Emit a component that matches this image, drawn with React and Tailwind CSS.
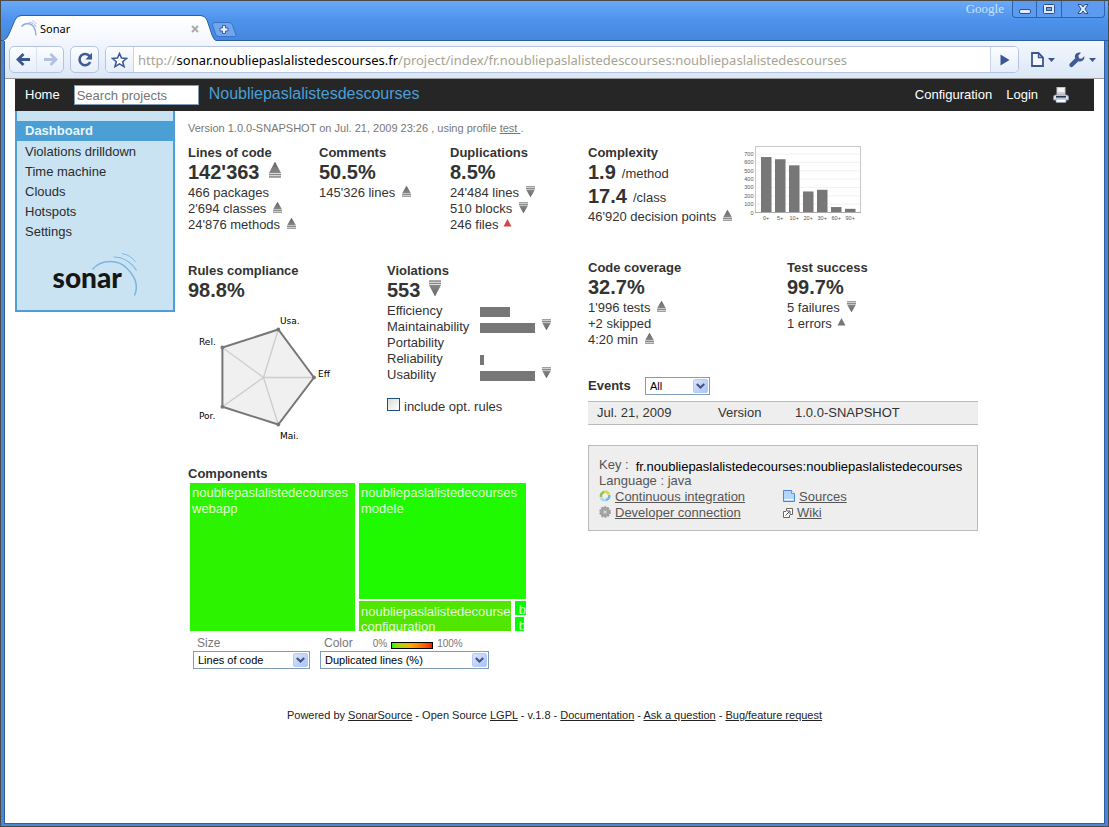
import React from "react";

function Trend({ dir = "up", size = "sm" }) {
  const cls = size === "lg" ? "w-[12px] h-[16px] ml-[9px] mb-1" : "w-[9px] h-[11px] ml-[7px] mb-[3px]";
  return (
    <svg viewBox="0 0 9 12" className={"inline-block shrink-0 " + cls} preserveAspectRatio="none" aria-hidden="true">
      <defs>
        <linearGradient id="trendFill" x1="0" x2="0" y1="0" y2="1">
          <stop offset="0" stopColor="#666" />
          <stop offset="1" stopColor="#888" />
        </linearGradient>
      </defs>
      <g transform={dir === "down" ? "rotate(180 4.5 6)" : undefined}>
        <path d="M4.3 0 H4.7 L9 8.2 H0 Z" fill="url(#trendFill)" />
        <rect x="0" y="8.8" width="9" height="1.2" fill="#858585" />
        <rect x="0" y="10.6" width="9" height="1.2" fill="#8c8c8c" />
      </g>
    </svg>
  );
}

function SmallTriangle({ color }) {
  return (
    <svg viewBox="0 0 9 8" className="ml-1 inline-block h-[8px] w-[9px] shrink-0" aria-hidden="true">
      <path d="M4.5 0 L8.5 7.500 H0.5 Z" fill={color} />
    </svg>
  );
}

function Title({ children }) {
  return <h2 className="font-bold leading-[16px]">{children}</h2>;
}

function Big({ children, trend, unit }) {
  return (
    <p className="flex h-6 items-center whitespace-nowrap pb-0.5">
      <strong className="text-[20px] leading-[22px]">{children}</strong>
      {unit && <span className="ml-1.5 mt-1">{unit}</span>}
      {trend && <Trend dir={trend} size="lg" />}
    </p>
  );
}

function Line({ children, trend }) {
  return (
    <p className="flex h-4 items-center whitespace-nowrap">
      {children}
      {trend && <Trend dir={trend} />}
    </p>
  );
}

function Select({ id, options, className }) {
  return (
    <span className={"relative block h-[18px] " + className}>
      <select
        id={id}
        className="block h-full w-full appearance-none rounded-none border border-[#7f9db9] bg-white pl-1 pr-5 text-[11px] leading-[14px] text-black outline-none"
      >
        {options.map((o) => (
          <option key={o}>{o}</option>
        ))}
      </select>
      <svg viewBox="0 0 15 14" className="pointer-events-none absolute right-[2px] top-[2px] h-[14px] w-[15px]" aria-hidden="true">
        <defs>
          <linearGradient id="arrowBtn" x1="0" x2="1" y1="0" y2="1">
            <stop offset="0" stopColor="#dbe6fe" />
            <stop offset="1" stopColor="#a9c1f5" />
          </linearGradient>
        </defs>
        <rect x="0.5" y="0.5" width="14" height="13" rx="1.5" fill="url(#arrowBtn)" stroke="#b7caf5" />
        <path d="M3.8 5 L7.5 8.6 L11.2 5" fill="none" stroke="#42567f" strokeWidth="2.1" />
      </svg>
    </span>
  );
}

function TitleBar() {
  return (
    <div className="flex h-10 items-end justify-between border-b border-[#2a60a8] bg-linear-to-b from-[#6aa9f7] via-[#4c92ec] to-[#4787dc] pl-[3px]">
      <div className="flex items-end">
        <div className="relative -mb-px h-[26px] w-[212px]">
          <svg viewBox="0 0 212 26" className="absolute inset-0 h-full w-full" aria-hidden="true">
            <defs>
              <linearGradient id="tabFill" x1="0" x2="0" y1="0" y2="1">
                <stop offset="0" stopColor="#ffffff" />
                <stop offset="1" stopColor="#f3f7fd" />
              </linearGradient>
            </defs>
            <path
              d="M0 26 V25 Q3 24 5 19 L11 5 Q13 1 17 1 H197 Q201 1 203 5 L208 20 Q210 25 212 25.5 V26 Z"
              fill="url(#tabFill)"
            />
            <path
              d="M0 25 Q3 24 5 19 L11 5 Q13 0.5 17 0.5 H197 Q201 0.5 203 5 L208 20 Q210 25 212 25.5"
              fill="none"
              stroke="#2a60a8"
            />
          </svg>
          <div className="relative flex h-full items-center pl-[17px] pr-[17px]">
            <svg viewBox="0 0 16 16" className="h-4 w-4" fill="none" aria-hidden="true">
              <path d="M0.5 6.5 Q3 3.5 7 3.5 Q14.5 4 15 15.5" stroke="#93abd9" strokeWidth="1.4" />
              <path d="M8 2.2 Q13 2.4 15.2 7" stroke="#a9bce2" />
              <path d="M11 0.8 Q14 1.4 15.6 4" stroke="#bccbe9" />
            </svg>
            <span className="ml-[3px] mt-0.5 font-['Noto_Sans',sans-serif] text-[11px] text-black">Sonar</span>
            <button type="button" aria-label="Close tab" className="ml-auto mt-0.5">
              <svg viewBox="0 0 8 8" className="h-2 w-2" aria-hidden="true">
                <path d="M1 1 L7 7 M7 1 L1 7" stroke="#a8a8a8" strokeWidth="1.8" />
              </svg>
            </button>
          </div>
        </div>
        <button type="button" aria-label="New tab" className="mb-[2px] -ml-[5px]">
          <svg viewBox="0 0 26 17" className="h-[17px] w-[26px]" aria-hidden="true">
            <path
              d="M4 1.5 H18 Q20.5 1.5 21.5 4 L25 14 Q25 15.5 23.5 15.5 H8 Q5.5 15.5 4.5 13 L1.5 4 Q1 1.5 4 1.5 Z"
              fill="#71a6ee"
              stroke="#3b74c2"
            />
            <path
              d="M11.5 4.5 H14.5 V7 H17 V10 H14.5 V12.5 H11.5 V10 H9 V7 H11.5 Z"
              fill="#e9f1fd"
              stroke="#33629f"
            />
          </svg>
        </button>
      </div>
      <div className="mr-[3px] flex items-start self-start">
        <span className="mr-2 font-['Liberation_Serif',serif] text-[13px] leading-[16px] text-[#cfe2fb]">Google</span>
        <div className="flex h-[17px] divide-x divide-[#2f62ad] rounded-b-[4px] border border-t-0 border-[#2f62ad] bg-[#5c9bf0]">
          <button type="button" aria-label="Minimize" className="flex w-6 items-center justify-center">
            <svg viewBox="0 0 12 12" className="h-3 w-3" aria-hidden="true">
              <rect x="0.5" y="6.5" width="11" height="4" rx="1.5" fill="#dfeafa" stroke="#2d4f85" />
            </svg>
          </button>
          <button type="button" aria-label="Maximize" className="flex w-[25px] items-center justify-center">
            <svg viewBox="0 0 12 12" className="h-3 w-3" aria-hidden="true">
              <rect x="0.5" y="1.5" width="11" height="9" rx="1" fill="#dfeafa" stroke="#2d4f85" />
              <rect x="3.5" y="4.5" width="5" height="3" fill="#6ba6f3" stroke="#2d4f85" />
            </svg>
          </button>
          <button type="button" aria-label="Close" className="flex w-[42px] items-center justify-center">
            <svg viewBox="0 0 12 12" className="h-3 w-3" aria-hidden="true">
              <path
                d="M1 1.5 H4.2 L6 4 L7.8 1.5 H11 L8 6 L11 10.5 H7.8 L6 8 L4.2 10.5 H1 L4 6 Z"
                fill="#dfeafa"
                stroke="#2d4f85"
              />
            </svg>
          </button>
        </div>
      </div>
    </div>
  );
}

function Toolbar() {
  return (
    <div className="flex h-[38px] items-center border-b border-[#9c9c9c] bg-linear-to-b from-[#f3f7fd] to-[#dbe7f6] pl-1 pr-2">
      <div className="flex h-[27px] rounded-[5px] border border-[#b5c3e0] bg-linear-to-b from-[#fbfdff] to-[#e6eefa]">
        <button type="button" aria-label="Back" className="flex w-[26px] items-center justify-center">
          <svg viewBox="0 0 15 13" className="h-[13px] w-[15px]" aria-hidden="true">
            <path d="M14 6.5 H2 M7.5 1 L2 6.5 L7.5 12" fill="none" stroke="#3a5791" strokeWidth="2.8" />
          </svg>
        </button>
        <button type="button" aria-label="Forward" className="flex w-[27px] items-center justify-center border-l border-[#dbe3f1]">
          <svg viewBox="0 0 15 13" className="h-[13px] w-[15px]" aria-hidden="true">
            <path d="M1 6.5 H13 M7.5 1 L13 6.5 L7.5 12" fill="none" stroke="#b0c1e2" strokeWidth="2.8" />
          </svg>
        </button>
      </div>
      <button
        type="button"
        aria-label="Reload"
        className="ml-1.5 flex h-[27px] w-[29px] items-center justify-center rounded-[5px] border border-[#b5c3e0] bg-linear-to-b from-[#fbfdff] to-[#e6eefa]"
      >
        <svg viewBox="0 0 16 16" className="h-4 w-4" aria-hidden="true">
          <path d="M12.6 4.2 A5.6 5.6 0 1 0 13.2 10" fill="none" stroke="#3f5b96" strokeWidth="2.6" />
          <path d="M15 0.8 V7.4 H8.4 Z" fill="#3f5b96" />
        </svg>
      </button>
      <form className="ml-1.5 flex h-[27px] flex-1 overflow-hidden rounded-[5px] border border-[#b5c3e0] bg-white" onSubmit={(e) => e.preventDefault()}>
        <button type="button" aria-label="Bookmark" className="flex w-7 items-center justify-center border-r border-[#c9d4e9] bg-linear-to-b from-[#fbfdff] to-[#e6eefa]">
          <svg viewBox="0 0 17 16" className="h-4 w-[17px]" aria-hidden="true">
            <path
              d="M8.5 1.5 L10.5 6 L15.6 6.4 L11.7 9.7 L13 14.6 L8.5 11.9 L4 14.6 L5.3 9.7 L1.4 6.4 L6.5 6 Z"
              fill="#fff"
              stroke="#3f5b96"
              strokeWidth="1.6"
            />
          </svg>
        </button>
        <div
          role="textbox"
          aria-label="Address"
          tabIndex={0}
          className="flex min-w-0 flex-1 items-center whitespace-nowrap pl-1 font-['Noto_Sans',sans-serif] text-[13px] text-[#a8a393]"
        >
          http://<span className="text-black">sonar.noubliepaslalistedescourses.fr</span>
          /project/index/fr.noubliepaslalistedescourses:noubliepaslalistedescourses
        </div>
        <button type="submit" aria-label="Go" className="flex w-7 items-center justify-center border-l border-[#c9d4e9] bg-linear-to-b from-[#fbfdff] to-[#e6eefa]">
          <svg viewBox="0 0 10 12" className="h-3 w-[10px]" aria-hidden="true">
            <path d="M0.5 0.5 L9.5 6 L0.5 11.5 Z" fill="#3a5791" />
          </svg>
        </button>
      </form>
      <button type="button" aria-label="Page menu" className="ml-3 flex items-center gap-1">
        <svg viewBox="0 0 13 15" className="h-[15px] w-[13px]" aria-hidden="true">
          <path d="M1 1 H7.5 L12 5.5 V14 H1 Z" fill="#f6f9fe" stroke="#3a5791" strokeWidth="1.8" />
          <path d="M7.5 1 V5.5 H12" fill="none" stroke="#3a5791" strokeWidth="1.4" />
        </svg>
        <svg viewBox="0 0 7 4" className="h-1 w-[7px]" aria-hidden="true">
          <path d="M0 0 H7 L3.5 4 Z" fill="#3a5791" />
        </svg>
      </button>
      <button type="button" aria-label="Settings menu" className="ml-3.5 flex items-center gap-1">
        <svg viewBox="0 0 16 16" className="h-4 w-4" aria-hidden="true">
          <path
            d="M15.3 4.2 L12.6 6.8 L10 6.2 L9.4 3.6 L12 0.8 C9.4 -0.2 6.6 1 6 3.6 C5.8 4.6 5.9 5.4 6.2 6.2 L0.9 11.6 C-0.9 13.6 1.8 16.4 3.9 14.6 L9.4 9.2 C12.6 10.4 16 7.8 15.3 4.2 Z"
            fill="#3f5b96"
          />
        </svg>
        <svg viewBox="0 0 7 4" className="h-1 w-[7px]" aria-hidden="true">
          <path d="M0 0 H7 L3.5 4 Z" fill="#3a5791" />
        </svg>
      </button>
    </div>
  );
}

function SiteNav() {
  return (
    <nav className="flex h-8 items-center bg-[#262626] pl-2.5 pr-[25px] text-white">
      <a href="#home">Home</a>
      <input
        type="text"
        aria-label="Search projects"
        placeholder="Search projects"
        className="ml-3.5 h-5 w-[125px] border border-[#7f9db9] bg-white px-[2px] text-[13px] text-black outline-none placeholder:text-[#757575]"
      />
      <a href="#project" className="mb-0.5 ml-2.5 text-[16px] text-[#4b9fd5]">
        Noubliepaslalistesdescourses
      </a>
      <a href="#configuration" className="ml-auto">Configuration</a>
      <a href="#login" className="ml-3.5">Login</a>
      <button type="button" aria-label="Print" className="ml-[15px]">
        <svg viewBox="0 0 16 16" className="h-4 w-4" aria-hidden="true">
          <rect x="4" y="0.5" width="8" height="8" fill="#f4f4f4" stroke="#c4c4c4" />
          <rect x="4" y="5" width="8" height="3" fill="#cfcfcf" />
          <path d="M2.5 8 H13.5 Q15.5 8 15.5 10 V13 H0.5 V10 Q0.5 8 2.5 8 Z" fill="#dde4f1" stroke="#8593ad" strokeWidth="0.8" />
          <rect x="3" y="9" width="10" height="1.6" fill="#24344f" />
          <rect x="3" y="12" width="10" height="3.4" rx="0.6" fill="#fff" stroke="#8593ad" strokeWidth="0.8" />
        </svg>
      </button>
    </nav>
  );
}

const MENU = ["Dashboard", "Violations drilldown", "Time machine", "Clouds", "Hotspots", "Settings"];

function Sidebar() {
  return (
    <aside className="w-40 shrink-0 border-2 border-t-0 border-[#4b9fd5] bg-[#cae3f2] pb-3 pt-2.5">
      <ul>
        {MENU.map((m, i) => (
          <li key={m} className="first:mb-px">
            <a
              href="#menu"
              className={
                "flex h-5 items-center pl-2 " + (i === 0 ? "bg-[#4b9fd5] font-bold text-[#e8f4fb]" : "text-[#2b2b2b]")
              }
            >
              {m}
            </a>
          </li>
        ))}
      </ul>
      <svg viewBox="0 0 100 46" className="ml-[30px] mt-2.5 h-[46px] w-[100px]" role="img" aria-label="sonar">
        <text x="5.5" y="36" fontSize="28" fontWeight="900" fill="#161616" className="font-['Lato',sans-serif]">
          sonar
        </text>
        <g fill="none" stroke="#7ab5e2" strokeWidth="1.5">
          <path d="M45.500 17.500 C54 7 72 7 80.500 17 C88.500 25 92 33 87.500 43.500" />
          <path d="M66.500 5 C76 5 84 10 89.500 18.500" strokeWidth="1.2" />
          <path d="M75 1.500 C81 2.500 85.500 5.500 88.500 10" strokeWidth="0.9" />
        </g>
      </svg>
    </aside>
  );
}

const BARS = [
  ["0+", 664],
  ["5+", 638],
  ["10+", 565],
  ["20+", 252],
  ["30+", 272],
  ["60+", 65],
  ["90+", 44],
];

function ComplexityChart() {
  return (
    <svg viewBox="0 0 120 78" className="h-[78px] w-[120px]" role="img" aria-label="Complexity distribution">
      <rect x="13.500" y="0.500" width="105" height="66" fill="#fff" stroke="#c9c9c9" />
      {[0, 1, 2, 3, 4, 5, 6, 7].map((n) => {
        const y = 66.5 - n * 8.35;
        return (
          <g key={n}>
            {n > 0 && <line x1="14" x2="118" y1={y} y2={y} stroke="#f2f2f2" />}
            <text x="11.500" y={y + 2} textAnchor="end" fontSize="5.5" fill="#555">
              {n * 100}
            </text>
          </g>
        );
      })}
      {BARS.map(([label, v], i) => (
        <g key={label}>
          <rect x={19 + i * 14} y={66.5 - v * 0.0835} width="10.500" height={v * 0.0835} fill="#777" />
          <text x={24.2 + i * 14} y="73.500" textAnchor="middle" fontSize="5.5" fill="#555">
            {label}
          </text>
        </g>
      ))}
      <line x1="13" x2="119" y1="66.500" y2="66.500" stroke="#aaa" />
    </svg>
  );
}

function Radar() {
  const pts = [
    [126, 74.5],
    [90.3, 26.5],
    [34.4, 44.5],
    [34.4, 103.8],
    [90.3, 121.5],
  ];
  return (
    <svg viewBox="0 0 150 150" className="h-[150px] w-[150px]" role="img" aria-label="Rules compliance by category">
      <polygon points={pts.map((p) => p.join(",")).join(" ")} fill="#f0f0f0" />
      {pts.map((p) => (
        <line key={p.join()} x1="75.500" y1="74.500" x2={p[0]} y2={p[1]} stroke="#ccc" strokeWidth="1.3" />
      ))}
      <polygon points={pts.map((p) => p.join(",")).join(" ")} fill="none" stroke="#777" strokeWidth="2" />
      {pts.map((p) => (
        <circle key={p.join()} cx={p[0]} cy={p[1]} r="1.900" fill="#777" />
      ))}
      <g fontSize="9" fill="#000" className="font-['DejaVu_Sans',sans-serif]">
        <text x="92" y="21">Usa.</text>
        <text x="11" y="42">Rel.</text>
        <text x="130" y="74">Eff</text>
        <text x="11" y="116">Por.</text>
        <text x="92" y="136">Mai.</text>
      </g>
    </svg>
  );
}

const VIOLATIONS = [
  { name: "Efficiency", w: 30 },
  { name: "Maintainability", w: 55, down: true },
  { name: "Portability", w: 0 },
  { name: "Reliability", w: 4 },
  { name: "Usability", w: 55, down: true },
];

function Treemap() {
  return (
    <div className="ml-[2px] mt-px flex h-[148px] w-[336px] gap-1 text-[#e2fbdc]">
      <div className="w-[165px] overflow-hidden bg-[#2cf400] pl-[2px] pt-[2px]">
        noubliepaslalistedecourses
        <br />
        webapp
      </div>
      <div className="flex w-[167px] flex-col gap-[2px]">
        <div className="h-[116px] overflow-hidden bg-[#20fa00] pl-[2px] pt-[2px]">
          noubliepaslalistedecourses
          <br />
          modele
        </div>
        <div className="flex h-[30px] gap-1">
          <div className="w-[152px] overflow-hidden bg-[#50e600] pl-[2px] pt-[3px] leading-[15px]">
            noubliepaslalistedecourses
            <br />
            configuration
          </div>
          <div className="flex flex-1 flex-col gap-[2px] leading-[18px]">
            <div className="h-[14px] overflow-hidden bg-[#00ff00] pl-1">b</div>
            <div className="h-[14px] w-[9px] overflow-hidden bg-[#00ff00] pl-1">b</div>
          </div>
        </div>
      </div>
    </div>
  );
}

function LeftColumn() {
  return (
    <div className="w-[400px] shrink-0">
      <div className="grid grid-cols-[131px_131px_1fr]">
        <section>
          <Title>Lines of code</Title>
          <Big trend="up">142'363</Big>
          <Line>466 packages</Line>
          <Line trend="up">2'694 classes</Line>
          <Line trend="up">24'876 methods</Line>
        </section>
        <section>
          <Title>Comments</Title>
          <Big>50.5%</Big>
          <Line trend="up">145'326 lines</Line>
        </section>
        <section>
          <Title>Duplications</Title>
          <Big>8.5%</Big>
          <Line trend="down">24'484 lines</Line>
          <Line trend="down">510 blocks</Line>
          <p className="flex h-4 items-center">
            246 files <span className="mb-1 ml-px flex"><SmallTriangle color="#d64545" /></span>
          </p>
        </section>
      </div>
      <div className="mt-[30px] grid grid-cols-[199px_1fr]">
        <section>
          <Title>Rules compliance</Title>
          <Big>98.8%</Big>
          <Radar />
        </section>
        <section>
          <Title>Violations</Title>
          <Big trend="down">553</Big>
          <table className="border-collapse">
            <tbody>
              {VIOLATIONS.map((v) => (
                <tr key={v.name} className="h-4">
                  <td className="w-[93px] p-0">{v.name}</td>
                  <td className="p-0">
                    <span className="flex h-4 items-end pb-0.5">
                      <span className="h-[10px] bg-[#777]" style={{ width: v.w }} />
                      {v.down && <Trend dir="down" />}
                    </span>
                  </td>
                </tr>
              ))}
            </tbody>
          </table>
          <div className="mt-[15px] flex items-start">
            <input
              id="opt"
              type="checkbox"
              className="h-[13px] w-[13px] appearance-none border border-[#1c5180] bg-linear-to-br from-[#dcdcd7] to-white checked:bg-[#4b9fd5]"
            />
            <label htmlFor="opt" className="ml-1 mt-px">include opt. rules</label>
          </div>
        </section>
      </div>
      <section className="mt-[13px]">
        <Title>Components</Title>
        <Treemap />
        <div className="ml-[5px] mt-[5px] flex gap-2.5 text-[12px] text-[#777]">
          <div>
            <label htmlFor="size" className="block pl-1 leading-[15px]">Size</label>
            <Select id="size" options={["Lines of code", "Complexity"]} className="w-[117px]" />
          </div>
          <div>
            <div className="flex h-[15px] items-center pl-1 leading-[15px]">
              <label htmlFor="color">Color</label>
              <span className="ml-5 text-[10px]">0%</span>
              <span className="mx-1 mt-1 h-[7px] w-[42px] border border-black bg-linear-to-r from-[#00f000] via-[#ffa500] to-[#ff0000]" />
              <span className="text-[10px]">100%</span>
            </div>
            <Select id="color" options={["Duplicated lines (%)", "Rules compliance"]} className="w-[169px]" />
          </div>
        </div>
      </section>
    </div>
  );
}

function RightColumn() {
  return (
    <div className="w-[390px] shrink-0">
      <section className="flex">
        <div className="w-[154px]">
          <Title>Complexity</Title>
          <Big unit="/method">1.9</Big>
          <Big unit="/class">17.4</Big>
          <Line trend="up">46'920 decision points</Line>
        </div>
        <div className="mt-px">
          <ComplexityChart />
        </div>
      </section>
      <div className="mt-[35px] grid grid-cols-[199px_1fr]">
        <section>
          <Title>Code coverage</Title>
          <Big>32.7%</Big>
          <Line trend="up">1'996 tests</Line>
          <Line>+2 skipped</Line>
          <Line trend="up">4:20 min</Line>
        </section>
        <section>
          <Title>Test success</Title>
          <Big>99.7%</Big>
          <Line trend="down">5 failures</Line>
          <p className="flex h-4 items-center">
            1 errors <span className="mb-1 ml-px flex"><SmallTriangle color="#777" /></span>
          </p>
        </section>
      </div>
      <section className="mt-[29px]">
        <div className="flex items-center">
          <label htmlFor="events" className="w-[57px] font-bold">Events</label>
          <Select id="events" options={["All", "Version"]} className="w-[65px]" />
        </div>
        <table className="mt-1.5 w-full border-y border-[#bbb] bg-[#eee]">
          <tbody>
            <tr className="h-[23px]">
              <td className="w-[130px] p-0 pl-[9px]">Jul. 21, 2009</td>
              <td className="w-[77px] p-0">Version</td>
              <td className="p-0">1.0.0-SNAPSHOT</td>
            </tr>
          </tbody>
        </table>
      </section>
      <section className="mt-5 border border-[#bbb] bg-[#eee] pb-[9px] pl-2.5 pt-[11px] text-[#555]">
        <p className="flex h-4 whitespace-nowrap">
          Key :<span className="ml-[7px] mt-[2px] text-black">fr.noubliepaslalistedecourses:noubliepaslalistedecourses</span>
        </p>
        <p>Language : java</p>
        <div className="grid grid-cols-[184px_1fr]">
          <a href="#ci" className="flex h-4 items-center gap-1 underline">
            <svg viewBox="0 0 12 12" className="mb-0.5 h-3 w-3" fill="none" strokeWidth="2.6" aria-hidden="true">
              <path d="M2 7 A4.200 4.200 0 0 1 5 2" stroke="#8cc63f" />
              <path d="M5 2 A4.200 4.200 0 0 1 10 4.500" stroke="#d5d84a" />
              <path d="M10.200 5 A4.200 4.200 0 0 1 7 10" stroke="#6fb6e6" />
              <path d="M7 10 A4.200 4.200 0 0 1 2 7.500" stroke="#a9d7f0" />
            </svg>
            Continuous integration
          </a>
          <a href="#sources" className="flex h-4 items-center gap-1 underline">
            <svg viewBox="0 0 12 12" className="mb-0.5 h-3 w-3" aria-hidden="true">
              <path d="M0.500 0.500 H8.500 L11.500 3.500 V11.500 H0.500 Z" fill="#b5d6f8" stroke="#4c8ad6" />
              <path d="M8.500 0.500 V3.500 H11.500" fill="#fff" stroke="#4c8ad6" strokeWidth="0.800" />
              <path d="M1.500 9.500 H10.500" stroke="#fff" />
            </svg>
            Sources
          </a>
          <a href="#dev" className="flex h-4 items-center gap-1 underline">
            <svg viewBox="0 0 12 12" className="mb-0.5 h-3 w-3" aria-hidden="true">
              <circle cx="6" cy="6" r="4.900" fill="#aaa" stroke="#999" strokeWidth="1.800" strokeDasharray="1.900 1.200" />
              <circle cx="6" cy="6" r="3" fill="#c2c2c2" stroke="#888" strokeWidth="0.600" />
              <circle cx="6" cy="6" r="1.500" fill="#eee" stroke="#888" strokeWidth="0.600" />
            </svg>
            Developer connection
          </a>
          <a href="#wiki" className="flex h-4 items-center gap-1 underline">
            <svg viewBox="0 0 10 10" className="h-[10px] w-[10px]" aria-hidden="true">
              <path d="M3.500 3 V0.500 H9.500 V6.500 H7" fill="#fff" stroke="#666" />
              <path d="M3 3.500 H0.500 V9.500 H6.500 V7" fill="#fff" stroke="#666" />
              <path d="M2.500 7.500 L6.500 3.500 M4 3 H7 V6" fill="none" stroke="#555" />
            </svg>
            Wiki
          </a>
        </div>
      </section>
    </div>
  );
}

function Footer() {
  return (
    <footer className="mt-[38px] text-center text-[11px] leading-[16px] text-[#222]">
      Powered by <a href="#s" className="underline">SonarSource</a> - Open Source{" "}
      <a href="#l" className="underline">LGPL</a> - v.1.8 - <a href="#d" className="underline">Documentation</a> -{" "}
      <a href="#a" className="underline">Ask a question</a> - <a href="#b" className="underline">Bug/feature request</a>
    </footer>
  );
}

export default function App() {
  return (
    <div className="flex min-h-screen flex-col border border-[#4a4a46] bg-[#4886dc] font-['Liberation_Sans',Arial,sans-serif] text-[13px] leading-[16px] text-[#333]">
      <TitleBar />
      <div className="mx-[3px] mb-[2px] flex flex-1 flex-col border-x border-b border-[#2f5f9f] bg-white">
        <Toolbar />
        <div className="px-2.5">
          <SiteNav />
          <div className="flex items-start">
            <Sidebar />
            <main className="ml-[13px] pt-[9px]">
              <p className="text-[11px] text-[#777]">
                Version 1.0.0-SNAPSHOT on Jul. 21, 2009 23:26 , using profile{" "}
                <a href="#test" className="underline">test </a>.
              </p>
              <div className="mt-[9px] flex items-start">
                <LeftColumn />
                <RightColumn />
              </div>
            </main>
          </div>
          <Footer />
        </div>
      </div>
    </div>
  );
}
